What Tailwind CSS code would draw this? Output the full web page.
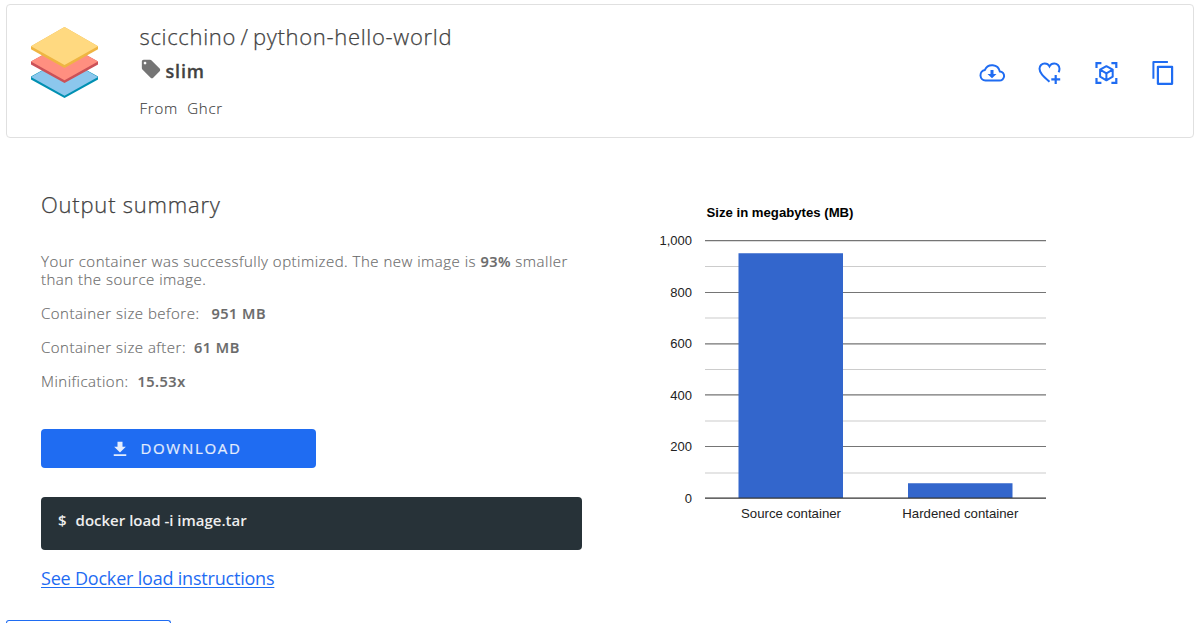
<!DOCTYPE html>
<html lang="en">
<head>
<meta charset="utf-8">
<title>Output summary</title>
<script src="https://cdn.jsdelivr.net/npm/@tailwindcss/browser@4"></script>
</head>
<body class="h-[623px] overflow-hidden bg-white font-['Open_Sans',sans-serif] text-[#424242]">
<div class="flex h-[623px] flex-col overflow-hidden px-1.5 pt-1">
  <header class="mr-[3px] flex h-[134px] shrink-0 rounded border border-[#e0e0e0] pl-[23.500px] pr-[15px]">
    <svg class="mt-[22px] h-[72px] w-[67px] shrink-0" viewBox="0 0 67 72">
      <path fill="#0090b2" d="M0 49.500 33.500 31 67 49.500v3L33.500 71 0 52.500z"/>
      <path fill="#8cc7ed" d="M0 50 33.500 31 67 50 33.500 68.700z"/>
      <path fill="#cb5157" d="M0 34.500 33.500 16 67 34.500v3L33.500 56 0 37.500z"/>
      <path fill="#ff8f80" d="M0 34.500 33.500 16 67 34.500 33.500 53.200z"/>
      <path fill="#efb542" d="M0 19.200 33.500 0 67 19.200v3L33.500 41 0 22.200z"/>
      <path fill="#ffd980" d="M0 19.200 33.500 0 67 19.200 33.500 38z"/>
    </svg>
    <div class="ml-[42px] flex flex-col items-start whitespace-nowrap">
      <h1 class="mt-4 text-[22px] leading-[30px] tracking-[0.68px] font-light [-webkit-text-stroke:0.25px] [word-spacing:-2px]">scicchino / python-hello-world</h1>
      <div class="mt-[5px] flex h-[30px] items-center">
        <svg class="mb-[5px] h-[22px] w-[22px]" viewBox="0 0 24 24" fill="#757575"><path d="M21.410 11.580l-9-9C12.050 2.220 11.550 2 11 2H4c-1.100 0-2 .9-2 2v7c0 .55.220 1.050.590 1.420l9 9c.36.360.860.580 1.410.580.550 0 1.050-.220 1.410-.590l7-7c.370-.360.590-.860.590-1.410 0-.550-.230-1.060-.590-1.420zM5.500 7C4.670 7 4 6.330 4 5.500S4.670 4 5.500 4 7 4.670 7 5.500 6.330 7 5.500 7z"/></svg>
        <span class="ml-1 text-lg font-semibold tracking-[0.8px] [-webkit-text-stroke:0.3px]">slim</span>
      </div>
      <div class="mt-3 flex gap-[9px] text-[15px] leading-5 tracking-[0.8px] font-light [-webkit-text-stroke:0.15px]"><span>From</span><span>Ghcr</span></div>
    </div>
    <nav class="ml-auto mt-[54px] flex h-7 items-center gap-[29px] text-[#1f6cf2]">
      <svg class="h-7 w-7" viewBox="1 0 28 28" fill="none" stroke="currentColor" stroke-width="2">
        <path d="M7.500 21.600h13.700a4.600 4.600 0 0 0 .6-9.200A7.900 7.900 0 0 0 6.900 10.900 5.400 5.400 0 0 0 7.500 21.600z"/>
        <path fill="currentColor" stroke="none" d="M12.500 11h3v4h3l-4.500 4.300L9.500 15h3z"/>
      </svg>
      <svg class="h-7 w-7" viewBox="0.500 0 28 28" fill="none" stroke="currentColor" stroke-width="2">
        <path d="M14 22.800C7.500 17 4 13.800 4 9.800a5.200 5.200 0 0 1 5.300-5.300c2 0 3.700 1 4.700 2.900 1-1.900 2.700-2.900 4.700-2.900A5.200 5.200 0 0 1 24 9.800c0 1.300-.3 2.400-.9 3.500"/>
        <path stroke-width="2.200" d="M15.800 20.400h8.900M20.200 16v8.900"/>
      </svg>
      <svg class="h-7 w-7" viewBox="0.600 0 28 28" fill="none" stroke="currentColor" stroke-width="2.200">
        <path d="M4.100 9V4.100H9M19 4.100h4.900V9M23.900 19v4.900H19M9 23.900H4.100V19"/>
        <path stroke-width="2" stroke-linejoin="round" d="M14 7.200l6.300 3.500v7L14 21.300l-6.300-3.600v-7zM7.700 10.700 14 14.300l6.300-3.600M14 14.300v7"/>
      </svg>
      <svg class="h-7 w-7" viewBox="0.500 0.200 28 28" fill="none" stroke="currentColor" stroke-width="2" stroke-linejoin="round">
        <path d="M3.900 20V3.200h14.500"/><path stroke-width="2.200" d="M8.400 8h14.200v17H8.400z"/>
      </svg>
    </nav>
  </header>

  <main class="flex h-[482px] shrink-0">
    <section class="ml-[35px] flex w-[541px] flex-col items-start pt-[50px] font-light whitespace-nowrap">
      <h2 class="text-[22px] leading-8 tracking-[0.78px] [-webkit-text-stroke:0.25px]">Output summary</h2>
      <div class="mt-8 flex flex-col gap-4 text-[15px] leading-[18px] tracking-[0.49px] text-[#6a6a6a] [-webkit-text-stroke:0.15px]">
        <p class="h-9">Your container was successfully optimized. The new image is <b class="text-[14.500px] leading-none font-semibold">93%</b> smaller<br>than the source image.</p>
        <p class="h-[18px]">Container size before:<b class="ml-3 text-[14.500px] leading-none font-semibold">951 MB</b></p>
        <p class="h-[18px]">Container size after:<b class="ml-2 text-[14.500px] leading-none font-semibold">61 MB</b></p>
        <p class="h-[18px]">Minification:<b class="ml-[9px] text-[14.500px] leading-none font-semibold">15.53x</b></p>
      </div>
      <button class="mt-[39px] flex h-[39px] w-[275px] items-center justify-center rounded bg-[#1f6cf2] pr-[5px] text-[15px] font-normal tracking-[1.700px] text-[#e4edfd] [-webkit-text-stroke:0.2px]">
        <svg class="mr-[10px] h-5 w-5" viewBox="0 0 24 24" fill="currentColor"><path d="M19 9h-4V3H9v6H5l7 7 7-7zM4.500 18v2h15v-2H4.500z" transform="translate(0 .3)"/></svg>
        <span>DOWNLOAD</span>
      </button>
      <div class="mt-[29px] flex h-[53px] w-full gap-[9px] rounded bg-[#273238] pl-[17px] pt-[13px] text-[15px] leading-5 font-semibold text-[#eeeeee]"><span>$</span><span>docker load -i image.tar</span></div>
      <a class="mt-4 text-lg leading-6 font-normal tracking-[-0.2px] text-[#1f6cf2] underline decoration-1 underline-offset-2">See Docker load instructions</a>
    </section>

    <svg class="ml-[58px] mt-[52px] h-[345px] w-[420px] shrink-0" viewBox="640 190 420 345" font-family="'Liberation Sans', Arial, sans-serif" font-size="13" fill="#222">
      <text x="706.500" y="217" font-weight="bold" fill="#000" textLength="147" lengthAdjust="spacingAndGlyphs">Size in megabytes (MB)</text>
      <g fill="#ccc">
        <path d="M705 266h341v1H705zM705 317.500h341v1H705zM705 369h341v1H705zM705 420.500h341v1H705zM705 472.500h341v1H705z"/>
      </g>
      <g fill="#757575">
        <path d="M705 240h341v1.200H705zM705 292h341v1H705zM705 343.300h341v1.200H705zM705 394.300h341v1.200H705zM705 446h341v1H705z"/>
      </g>
      <g fill="#3366cc"><path d="M738.500 253.300h104.500V498H738.500zM908 483.300h104.500V498H908z"/></g>
      <path fill="#333" d="M705 497.500h341v1.300H705z"/>
      <g text-anchor="end">
        <text x="692" y="245" textLength="32.500" lengthAdjust="spacingAndGlyphs">1,000</text>
        <text x="692" y="297">800</text>
        <text x="692" y="348">600</text>
        <text x="692" y="400">400</text>
        <text x="692" y="451">200</text>
        <text x="692" y="503">0</text>
      </g>
      <g text-anchor="middle">
        <text x="791" y="518" textLength="100" lengthAdjust="spacingAndGlyphs">Source container</text>
        <text x="960.300" y="518" textLength="116" lengthAdjust="spacingAndGlyphs">Hardened container</text>
      </g>
    </svg>
  </main>
  <div class="h-[3px] w-[165px] shrink-0 rounded-t border border-b-0 border-[#1f6cf2]"></div>
</div>
</body>
</html>
